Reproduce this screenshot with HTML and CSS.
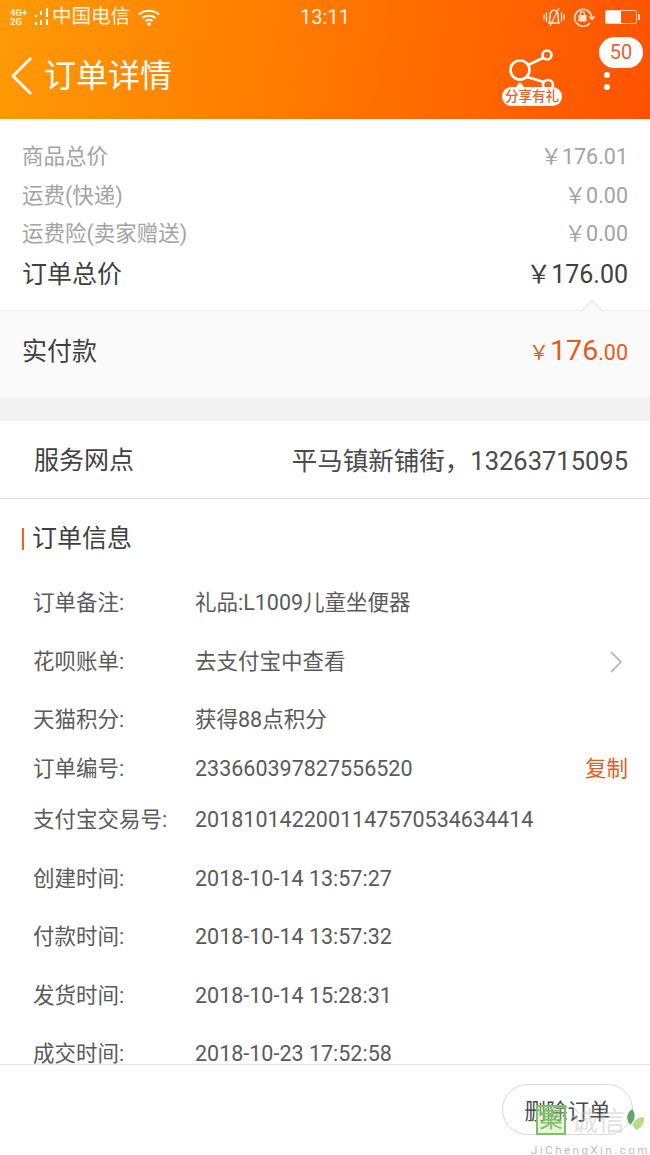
FILE: index.html
```html
<!DOCTYPE html>
<html lang="zh">
<head>
<title>订单详情</title>
<meta name="viewport" content="width=device-width, initial-scale=1.0">
<link rel="stylesheet" href="styles.css">
</head>
<body>

<header class="cabecera">
    <div class="estado">
        <div class="estado-izq">
            <span class="red"><span>4G+</span><span>2G</span></span>
            <svg class="senal" width="18" height="20" viewBox="0 0 18 20">
                <path d="M2 8v2M2 15v3M7 4v4M7 13v5M13 1v9M13 12v6" stroke="#fff" stroke-width="2" fill="none"/>
            </svg>
            <span class="operador">中国电信</span>
            <svg class="wifi" width="22" height="18" viewBox="0 0 22 18">
                <path d="M1 6.500C6.500 1.500 15.500 1.500 21 6.500M4.500 10C8 7 14 7 17.500 10M7.500 13C9.500 11.600 12.500 11.600 14.500 13" stroke="#fff" stroke-width="2" fill="none"/>
                <circle cx="11" cy="16" r="1.800" fill="#fff"/>
            </svg>
        </div>
        <span class="hora">13:11</span>
        <div class="estado-der">
            <svg width="22" height="20" viewBox="0 0 22 20" opacity="0.85">
                <path d="M6 16c1-2 1-5 1-8 0-2 2-5 4-5s4 3 4 5c0 3 0 6 1 8z" stroke="#fff" stroke-width="1.600" fill="none"/>
                <path d="M7 19L16 1M1 7v6M3.500 5v10M18.500 5v10M21 7v6" stroke="#fff" stroke-width="1.300" fill="none"/>
            </svg>
            <svg width="24" height="20" viewBox="0 0 24 20" opacity="0.85">
                <path d="M17 16a8.500 8.500 0 1 1 1.500-7" stroke="#fff" stroke-width="1.500" fill="none"/>
                <path d="M15.500 9.500h7l-3.500 4z" fill="#fff"/>
                <rect x="5.500" y="8" width="8" height="6.500" fill="#fff"/>
                <path d="M7.500 8V6.500a2 2 0 0 1 4 0V8" stroke="#fff" stroke-width="1.300" fill="none"/>
            </svg>
            <div class="bateria"><div class="carga"></div></div>
        </div>
    </div>
    <div class="nav">
        <svg class="volver" width="24" height="40" viewBox="0 0 24 40">
            <path d="M21 2L3 20l18 18" stroke="#fff" stroke-width="2.800" fill="none"/>
        </svg>
        <span class="titulo">订单详情</span>
        <div class="compartir">
            <svg width="60" height="52" viewBox="0 0 60 52">
                <circle cx="18" cy="22" r="9.500" stroke="#fff" stroke-width="2.600" fill="none"/>
                <circle cx="45" cy="7" r="4.500" stroke="#fff" stroke-width="2.600" fill="none"/>
                <circle cx="46" cy="37" r="5" stroke="#fff" stroke-width="2.600" fill="none"/>
                <path d="M26 17L41 10M25 29L42 34" stroke="#fff" stroke-width="2.600" fill="none"/>
                <path d="M13 40h10l-5-6z" fill="#fff"/>
            </svg>
            <span class="regalo">分享有礼</span>
        </div>
        <div class="mas">
            <span class="globo">50</span>
            <span class="punto"></span>
            <span class="punto"></span>
        </div>
    </div>
</header>

<main class="contenido">
    <section class="precios">
        <div class="fila-precio"><span>商品总价</span><span>￥176.01</span></div>
        <div class="fila-precio"><span>运费(快递)</span><span>￥0.00</span></div>
        <div class="fila-precio"><span>运费险(卖家赠送)</span><span>￥0.00</span></div>
        <div class="fila-precio total"><span>订单总价</span><span>￥176.00</span></div>
    </section>

    <section class="pago">
        <span class="flecha"></span>
        <span>实付款</span>
        <span class="monto"><small>￥</small><b>176</b><small class="cent">.00</small></span>
    </section>

    <section class="servicio">
        <span>服务网点</span>
        <span class="direccion">平马镇新铺街，13263715095</span>
    </section>

    <section class="info">
        <h2 class="info-titulo">订单信息</h2>
        <div class="dato"><span class="etq">订单备注:</span><span class="val">礼品:L1009儿童坐便器</span></div>
        <div class="dato"><span class="etq">花呗账单:</span><span class="val">去支付宝中查看</span>
            <svg class="ir" width="14" height="24" viewBox="0 0 14 24"><path d="M2 2l10 10L2 22" stroke="#bbb" stroke-width="1.800" fill="none"/></svg>
        </div>
        <div class="dato"><span class="etq">天猫积分:</span><span class="val">获得88点积分</span></div>
        <div class="dato orden"><span class="etq">订单编号:</span><span class="val">233660397827556520</span><span class="copiar">复制</span></div>
        <div class="dato alipay"><span class="etq">支付宝交易号:</span><span class="val">2018101422001147570534634414</span></div>
        <div class="dato"><span class="etq">创建时间:</span><span class="val">2018-10-14 13:57:27</span></div>
        <div class="dato"><span class="etq">付款时间:</span><span class="val">2018-10-14 13:57:32</span></div>
        <div class="dato"><span class="etq">发货时间:</span><span class="val">2018-10-14 15:28:31</span></div>
        <div class="dato"><span class="etq">成交时间:</span><span class="val">2018-10-23 17:52:58</span></div>
    </section>
</main>

<footer class="pie">
    <button class="borrar">删除订单</button>
</footer>

<div class="marca">
    <div class="marca-fila">
        <span class="marca-sello">集</span>
        <span class="marca-texto">诚信</span>
        <svg class="marca-hoja" width="20" height="28" viewBox="0 0 22 28">
            <path d="M8 1C2 4 0 12 6 18c4-4 7-11 2-17z" fill="#5fa86a"/>
            <path d="M8 18c3-6 8-9 13-8 1 6-4 13-9 14z" fill="#b7dc86"/>
        </svg>
    </div>
    <div class="marca-web">JiChengXin.com</div>
</div>

</body>
</html>
```

FILE: styles.css
```css
body {
    margin: 0;
    height: 1155px;
    display: flex;
    flex-direction: column;
    background: #fff;
    color: #4a4a4a;
    font-family: "Roboto", "Noto Sans CJK SC", sans-serif;
    overflow: hidden;
}

.cabecera {
    height: 119px;
    flex: none;
    background: linear-gradient(100deg, #ff9a05, #ff7a00 45%, #ff5200);
    color: #fff;
}

.estado {
    height: 33px;
    display: flex;
    align-items: center;
    justify-content: space-between;
    padding: 0 10px;
}

.estado-izq, .estado-der {
    width: 210px;
    display: flex;
    align-items: center;
}

.estado-der {
    justify-content: flex-end;
    gap: 8px;
}

.red {
    display: flex;
    flex-direction: column;
    font-size: 9.500px;
    font-weight: bold;
    line-height: 9px;
    width: 24px;
    opacity: 0.9;
}

.operador {
    font-size: 19.500px;
    line-height: 33px;
    opacity: 0.9;
}

.wifi {
    margin-left: 8px;
}

.hora {
    font-size: 20px;
    opacity: 0.9;
}

.bateria {
    width: 32px;
    height: 14px;
    margin-right: 3px;
    box-sizing: border-box;
    border: 1px solid rgba(255, 255, 255, 0.75);
    border-radius: 2px;
    position: relative;
}

.bateria::after {
    content: "";
    position: absolute;
    right: -4px;
    top: 3px;
    width: 2px;
    height: 6px;
    background: rgba(255, 255, 255, 0.75);
}

.carga {
    width: 15px;
    height: 12px;
    background: #fff;
}

.nav {
    height: 86px;
    display: flex;
    align-items: center;
    padding-left: 10px;
}

.volver {
    flex: none;
    margin-top: -1px;
}

.titulo {
    margin-left: 10px;
    flex: 1;
    font-size: 32px;
    line-height: 44px;
}

.compartir {
    position: relative;
    width: 60px;
    height: 58px;
    margin-right: 37px;
    margin-top: 2px;
}

.compartir svg {
    position: absolute;
    left: 0;
    top: 0;
}

.regalo {
    position: absolute;
    left: 0;
    bottom: 0;
    width: 60px;
    height: 19px;
    border-radius: 10px;
    background: #fff;
    color: #e8622a;
    font-size: 13.500px;
    font-weight: 500;
    line-height: 19px;
    text-align: center;
    white-space: nowrap;
}

.mas {
    width: 44px;
    margin-right: 7px;
    margin-top: -26px;
    display: flex;
    flex-direction: column;
    align-items: center;
    gap: 6px;
}

.globo {
    width: 44px;
    height: 31px;
    margin-bottom: -2px;
    border-radius: 16px;
    background: #fff;
    color: #e8622a;
    font-size: 20px;
    line-height: 31px;
    text-align: center;
}

.punto {
    width: 6px;
    height: 6px;
    border-radius: 50%;
    background: #fff;
    margin-right: 29px;
}

.contenido {
    flex: 1;
    overflow: hidden;
}

.precios {
    padding: 19px 22px 0;
    height: 191px;
    box-sizing: border-box;
}

.fila-precio {
    height: 38.500px;
    display: flex;
    justify-content: space-between;
    align-items: center;
    color: #a3a3a3;
    font-size: 21.500px;
    line-height: 30px;
}

.fila-precio.total {
    height: 42px;
    color: #3f3f3f;
    font-size: 25px;
}

.pago {
    position: relative;
    height: 87px;
    box-sizing: border-box;
    padding: 0 22px 5px;
    background: #fafafa;
    border-top: 1px solid #f0f0f0;
    display: flex;
    justify-content: space-between;
    align-items: center;
    font-size: 25px;
    line-height: 34px;
    color: #3f3f3f;
}

.flecha {
    position: absolute;
    right: 50px;
    top: -8px;
    width: 15px;
    height: 15px;
    background: #fafafa;
    border-top: 1px solid #e4e4e4;
    border-left: 1px solid #e4e4e4;
    transform: rotate(45deg);
}

.monto {
    color: #e8591a;
}

.monto small {
    font-size: 20px;
}

.monto b {
    font-size: 28.500px;
    font-weight: normal;
    margin-left: 1px;
}

.monto .cent {
    font-size: 21.500px;
}

.servicio {
    margin-top: 23px;
    height: 79px;
    box-sizing: border-box;
    padding: 2px 22px 0 34px;
    border-top: 1px solid #f2f2f2;
    border-bottom: 1px solid #dcdcdc;
    box-shadow: 0 -24px 0 0 #f2f2f2;
    display: flex;
    justify-content: space-between;
    align-items: center;
    font-size: 25px;
    line-height: 34px;
    color: #3f3f3f;
}

.direccion {
    font-size: 25.500px;
    color: #4a4a4a;
}

.info {
    padding: 22px 22px 0 33px;
}

.info-titulo {
    margin: 0 0 17px -11px;
    padding-left: 10px;
    height: 36px;
    line-height: 36px;
    font-size: 25px;
    font-weight: normal;
    color: #3f3f3f;
    position: relative;
}

.info-titulo::before {
    content: "";
    position: absolute;
    left: 0;
    top: 7px;
    width: 2px;
    height: 22px;
    background: #f0641e;
}

.dato {
    display: flex;
    align-items: center;
    height: 58.500px;
    font-size: 21.500px;
    line-height: 30px;
    color: #5a5a5a;
}

.dato.orden {
    height: 39.500px;
}

.dato.alipay {
    height: 60.500px;
    padding-top: 2px;
    box-sizing: border-box;
}

.etq {
    width: 162px;
    flex: none;
}

.val {
    flex: 1;
}

.ir {
    margin-right: 5px;
}

.copiar {
    color: #e8591a;
}

.pie {
    height: 91px;
    flex: none;
    box-sizing: border-box;
    border-top: 1px solid #e4e4e4;
    padding: 19px 17px 0 0;
    display: flex;
    justify-content: flex-end;
    align-items: flex-start;
    background: #fff;
}

.borrar {
    width: 131px;
    height: 51px;
    border: 1px solid #d8d8d8;
    border-radius: 26px;
    background: #fff;
    color: #4a4a4a;
    font-family: inherit;
    font-size: 21.500px;
    padding: 0;
}

.marca {
    position: absolute;
    left: 531px;
    top: 1105px;
    width: 119px;
}

.marca-fila {
    display: flex;
    align-items: flex-start;
    height: 38px;
}

.marca-sello {
    width: 30px;
    height: 30px;
    margin-left: 5px;
    border: 2px solid #7cc06a;
    box-sizing: border-box;
    color: #7cc06a;
    background: rgba(190, 230, 150, 0.4);
    font-size: 23px;
    line-height: 25px;
    text-align: center;
}

.marca-texto {
    font-size: 27px;
    line-height: 34px;
    color: rgba(190, 190, 190, 0.45);
    margin-left: 5px;
}

.marca-hoja {
    margin-top: 2px;
}

.marca-web {
    font-size: 11.500px;
    letter-spacing: 2.500px;
    color: #a7c9c0;
    line-height: 14px;
    white-space: nowrap;
}
```
